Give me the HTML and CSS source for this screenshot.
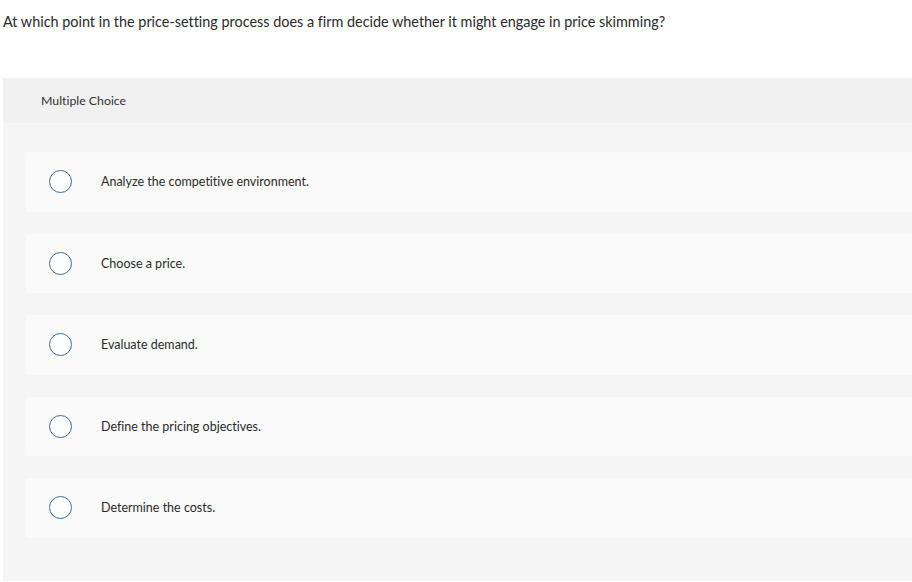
FILE: index.html
```html
<!DOCTYPE html>
<html>
<head>
<meta charset="utf-8">
<link rel="stylesheet" href="styles.css">
</head>
<body>
<div class="page">
  <p class="question">At which point in the price-setting process does a firm decide whether it might engage in price skimming?</p>
  <section class="panel">
    <header class="panel-head">Multiple Choice</header>
    <div class="options">
      <div class="option"><span class="radio"></span><span class="label">Analyze the competitive environment.</span></div>
      <div class="option"><span class="radio"></span><span class="label">Choose a price.</span></div>
      <div class="option"><span class="radio"></span><span class="label">Evaluate demand.</span></div>
      <div class="option"><span class="radio"></span><span class="label">Define the pricing objectives.</span></div>
      <div class="option"><span class="radio"></span><span class="label">Determine the costs.</span></div>
    </div>
  </section>
</div>
</body>
</html>
```

FILE: styles.css
```css
html, body {
  margin: 0;
  padding: 0;
  background: #fff;
  overflow: hidden;
}
body {
  font-family: Lato, "Liberation Sans", sans-serif;
  font-variant-ligatures: none;
  color: #333;
}
.page {
  padding-left: 3px;
}
.question {
  margin: 0;
  padding-top: 13px;
  font-size: 14.4px;
  line-height: 18px;
  color: #2a2a2a;
  height: 78px;
  box-sizing: border-box;
}
.panel {
  background: #f5f5f5;
  height: 503px;
}
.panel-head {
  background: #f0f0f0;
  height: 45px;
  padding-left: 38px;
  display: flex;
  align-items: center;
  font-size: 12.3px;
  color: #333;
}
.options {
  display: flex;
  flex-direction: column;
  gap: 22px;
  padding: 29px 0 0 23px;
}
.option {
  background: #fafafa;
  height: 59.5px;
  border-radius: 3px 0 0 3px;
  display: flex;
  align-items: center;
  padding-left: 23px;
}
.radio {
  width: 21px;
  height: 21px;
  border: 1.5px solid #3a6a9a;
  border-radius: 50%;
  background: #fff;
  flex: none;
}
.label {
  margin-left: 29px;
  font-size: 12.5px;
  color: #2a2a2a;
}
```
